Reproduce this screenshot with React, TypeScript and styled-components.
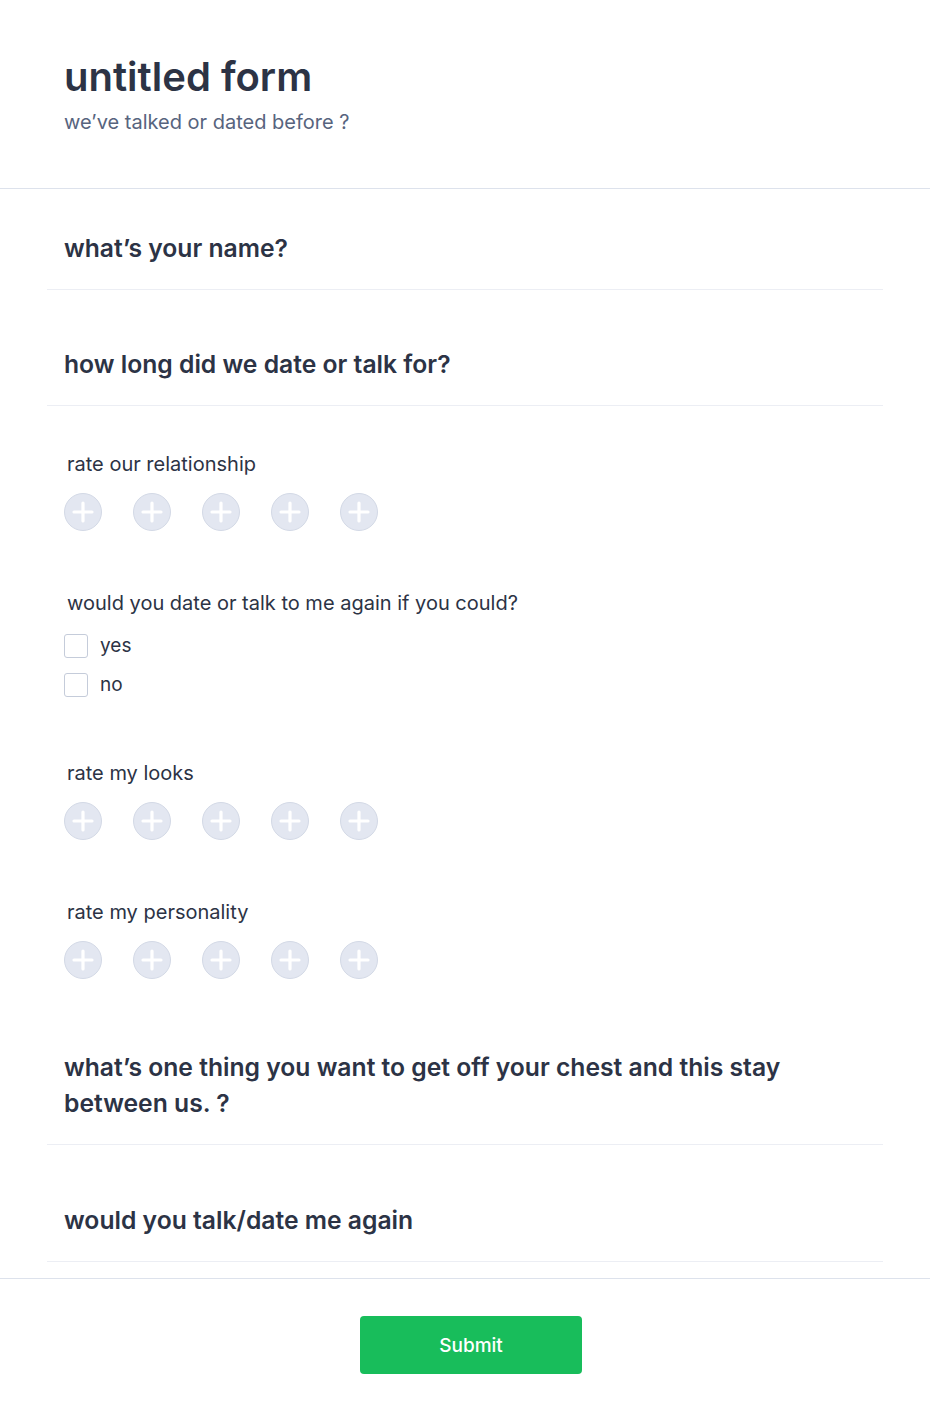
import React from 'react';
import styled, { createGlobalStyle } from 'styled-components';

const GlobalStyle = createGlobalStyle`
  * {
    box-sizing: border-box;
  }

  body {
    margin: 0;
    background: #ffffff;
    font-family: Inter, "Noto Sans", "Liberation Sans", sans-serif;
    color: #2c3345;
  }
`;

const Page = styled.div`
  width: 930px;
  background: #ffffff;
`;

const Header = styled.header`
  padding: 53px 64px 52px;
  border-bottom: 1px solid #dde2ec;
`;

const Title = styled.h1`
  margin: 0;
  font-size: 40px;
  line-height: 48px;
  font-weight: 600;
  color: #2c3345;
`;

const Subtitle = styled.p`
  margin: 7px 0 0;
  font-size: 20px;
  line-height: 28px;
  color: #57647e;
`;

const FieldList = styled.div`
  margin: 0 47px;
  padding-bottom: 16px;
`;

const Field = styled.div<{ $top: number; $divider?: boolean }>`
  padding: ${(p) => p.$top}px 17px ${(p) => (p.$divider ? 23 : 0)}px;
  border-bottom: ${(p) => (p.$divider ? '1px solid #eceef4' : 'none')};
`;

const Heading = styled.h2`
  margin: 0;
  max-width: 760px;
  font-size: 24.7px;
  line-height: 36px;
  font-weight: 600;
  color: #2c3345;
`;

const Label = styled.div`
  padding-left: 3px;
  font-size: 20px;
  line-height: 28px;
  color: #2c3345;
`;

const Rating = styled.div`
  display: flex;
  gap: 31px;
  margin-top: 15px;
`;

const RateButton = styled.span`
  display: flex;
  align-items: center;
  justify-content: center;
  width: 38px;
  height: 38px;
  border-radius: 50%;
  background: #e3e7f1;
  border: 1px solid #d3d9e6;
`;

const Options = styled.div`
  display: flex;
  flex-direction: column;
  gap: 15px;
  margin-top: 17px;
`;

const Option = styled.label`
  display: flex;
  align-items: center;
  gap: 12px;
  font-size: 19px;
  line-height: 24px;
  color: #2c3345;
`;

const Box = styled.span`
  width: 24px;
  height: 24px;
  border: 1px solid #c5ccda;
  border-radius: 3px;
  background: #ffffff;
`;

const Footer = styled.div`
  display: flex;
  justify-content: center;
  padding: 37px 0 50px;
  border-top: 1px solid #dde2ec;
`;

const SubmitButton = styled.button`
  width: 222px;
  height: 58px;
  margin-left: 12px;
  border: none;
  border-radius: 4px;
  background: #18bd5b;
  color: #ffffff;
  font-family: Inter, "Noto Sans", "Liberation Sans", sans-serif;
  font-size: 19px;
  font-weight: 500;
  cursor: pointer;
`;

const Plus = () => (
  <svg width="22" height="22" viewBox="0 0 22 22">
    <path d="M11 2 V20 M2 11 H20" stroke="#ffffff" strokeWidth="3.2" strokeLinecap="round" />
  </svg>
);

const RateRow = () => (
  <Rating>
    {[1, 2, 3, 4, 5].map((n) => (
      <RateButton key={n}>
        <Plus />
      </RateButton>
    ))}
  </Rating>
);

const App: React.FC = () => (
  <Page>
    <GlobalStyle />
    <Header>
      <Title>untitled form</Title>
      <Subtitle>we’ve talked or dated before ?</Subtitle>
    </Header>
    <FieldList>
      <Field $top={41} $divider>
        <Heading>what’s your name?</Heading>
      </Field>
      <Field $top={56} $divider>
        <Heading>how long did we date or talk for?</Heading>
      </Field>
      <Field $top={44}>
        <Label>rate our relationship</Label>
        <RateRow />
      </Field>
      <Field $top={58}>
        <Label>would you date or talk to me again if you could?</Label>
        <Options>
          <Option>
            <Box />
            yes
          </Option>
          <Option>
            <Box />
            no
          </Option>
        </Options>
      </Field>
      <Field $top={62}>
        <Label>rate my looks</Label>
        <RateRow />
      </Field>
      <Field $top={58}>
        <Label>rate my personality</Label>
        <RateRow />
      </Field>
      <Field $top={70} $divider>
        <Heading>what’s one thing you want to get off your chest and this stay between us. ?</Heading>
      </Field>
      <Field $top={57} $divider>
        <Heading>would you talk/date me again</Heading>
      </Field>
    </FieldList>
    <Footer>
      <SubmitButton>Submit</SubmitButton>
    </Footer>
  </Page>
);

export default App;
